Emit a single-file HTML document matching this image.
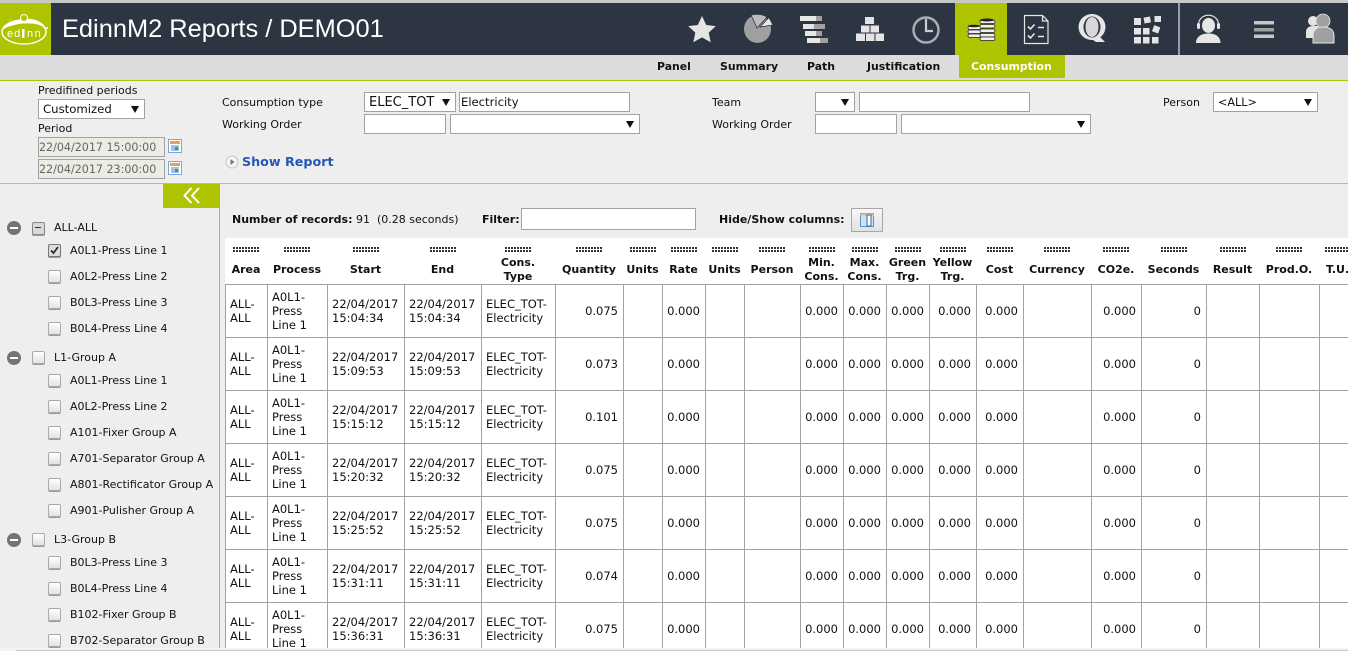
<!DOCTYPE html>
<html><head><meta charset="utf-8"><title>EdinnM2 Reports</title>
<style>
html,body{margin:0;padding:0;width:1348px;height:651px;overflow:hidden;background:#f4f4f4}
body{font:11px/14px "DejaVu Sans",sans-serif;color:#111;position:relative}
.a{position:absolute;white-space:nowrap}
.box{position:absolute;background:#fff;border:1px solid #a2a2a2;box-sizing:border-box;height:20px;line-height:19px;padding-left:4px;font-size:11.7px;white-space:nowrap}
.box i{position:absolute;right:5px;top:6px;width:0;height:0;border-left:4px solid transparent;border-right:4px solid transparent;border-top:7px solid #111}
.dis{background:#ecebe4;color:#666;padding-left:0;font-size:11.1px}
.tab{position:absolute;top:60px;font-weight:bold;font-size:10.9px;white-space:nowrap;color:#111}
.minus{position:absolute;left:7px;width:14px;height:14px;border-radius:50%;background:#747474}
.minus:after{content:"";position:absolute;left:3px;top:6px;width:8px;height:2px;background:#fff}
.cb{position:absolute;width:11px;height:11px;border:1px solid #aaa;border-radius:2px;background:linear-gradient(#fff,#e2e2e2);box-shadow:0 1px 0 #999}
.t{position:absolute;white-space:nowrap}
table{border-collapse:collapse;table-layout:fixed;position:absolute}
#hd{left:225px;top:238px;width:1155px;background:#fff}
#hd th{height:46px;padding:0;text-align:center;vertical-align:top;font-size:11px;line-height:14px;position:relative;overflow:visible;white-space:nowrap}
#hd th u{position:absolute;left:50%;margin-left:-13px;top:9px;width:26px;height:5px;background:repeating-linear-gradient(90deg,#333 0 2px,transparent 2px 3px);-webkit-mask:repeating-linear-gradient(#000 0 2px,transparent 2px 3px)}
#hd th b{position:absolute;left:-6px;right:-6px;bottom:0;height:28px;display:flex;align-items:center;justify-content:center;font-weight:bold}
#bd{left:225px;top:284px;width:1155px;background:#fff}
#bd td{border:1px solid #a2a2a2;height:52px;padding:0 4px;font-size:11.5px;line-height:14px;overflow:hidden;white-space:nowrap;box-sizing:border-box}
#bd td.n{text-align:right;padding-right:5px}
#clip{position:absolute;left:0;top:0;width:1348px;height:648px;overflow:hidden}
</style></head><body>
<div id="clip">
<div class="a" style="left:0;top:0;width:1348px;height:3px;background:#c8c8c8"></div>
<div class="a" style="left:0;top:3px;width:1348px;height:52px;background:#2d3542"></div>
<div class="a" style="left:0;top:3px;width:51px;height:52px;background:#afc400"></div>
<div class="a" style="left:62px;top:13px;font:25.4px/32px 'Liberation Sans',sans-serif;color:#fff">EdinnM2 Reports / DEMO01</div>
<div class="a" style="left:955px;top:3px;width:52px;height:52px;background:#afc400"></div>
<div class="a" style="left:1178px;top:3px;width:2px;height:52px;background:#9a9fa6"></div>

<svg class="a" style="left:0;top:0" width="1348" height="55" viewBox="0 0 1348 55">
 <!-- logo -->
 <ellipse cx="24" cy="32" rx="22" ry="12" fill="none" stroke="#fff" stroke-width="1.500"/>
 <path d="M2 30C8 18 38 13 46 28C36 21 14 22 2 30Z" fill="#fff"/>
 <circle cx="24" cy="18" r="3.500" fill="#afc400" stroke="#fff" stroke-width="1"/>
 <text x="7" y="37" font-family="'Liberation Sans',sans-serif" font-size="11" letter-spacing="1" fill="#fff">ed</text>
 <rect x="22" y="29" width="2.500" height="9" fill="#fff"/>
 <text x="27" y="37" font-family="'Liberation Sans',sans-serif" font-size="11" letter-spacing="1.500" fill="#fff">nn</text>
 <circle cx="47" cy="28" r="1" fill="#fff"/>
 <!-- star -->
 <path d="M702 16l4.200 9 9.600 1.100-7.100 6.500 2 9.700-8.700-4.900-8.700 4.900 2-9.700-7.100-6.500 9.600-1.100z" fill="#e4e4e4"/>
 <!-- pie -->
 <ellipse cx="757.500" cy="29" rx="13.500" ry="14" fill="#a0a0a0"/>
 <path d="M757 28L751 15C756 14 763 14 767 17Z" fill="#bdbdbd" stroke="#2d3542" stroke-width=".8"/>
 <path d="M760 27L769 17.500L773 25Z" fill="#e8e8e8" stroke="#2d3542" stroke-width=".8"/>
 <!-- bars -->
 <g fill="#e6e6e6"><rect x="800" y="16" width="16" height="5"/><rect x="803" y="24" width="11" height="5"/><rect x="805" y="31" width="11" height="5"/><rect x="807" y="38" width="13" height="5"/></g>
 <g fill="#a0a0a0"><rect x="816" y="16" width="6" height="5"/><rect x="814" y="24" width="11" height="5"/><rect x="816" y="31" width="6" height="5"/><rect x="820" y="38" width="8" height="5"/></g>
 <!-- pyramid -->
 <g fill="#e4e4e4"><rect x="865" y="17" width="9" height="7"/><rect x="861" y="25.500" width="8.500" height="7"/><rect x="870.500" y="25.500" width="8.500" height="7"/><rect x="856" y="33.500" width="9" height="7.500"/><rect x="866" y="33.500" width="8.500" height="7.500"/><rect x="875.500" y="33.500" width="8.500" height="7.500"/></g>
 <!-- clock -->
 <circle cx="926" cy="30" r="12.500" fill="none" stroke="#a9adb6" stroke-width="2.500"/>
 <path d="M926 19v12h7" fill="none" stroke="#c9ccd2" stroke-width="2.200"/>
 <!-- coins -->
 <g fill="#eee" stroke="#222" stroke-width=".8">
  <rect x="968" y="26" width="13" height="3.500" rx="1.700"/><rect x="968" y="30" width="13" height="3.500" rx="1.700"/><rect x="968" y="34" width="13" height="3.500" rx="1.700"/>
  <rect x="980" y="20" width="15" height="3.500" rx="1.700"/><rect x="980" y="24.500" width="15" height="3.500" rx="1.700"/><rect x="980" y="29" width="15" height="3.500" rx="1.700"/><rect x="980" y="33.500" width="15" height="3.500" rx="1.700"/><rect x="980" y="37" width="15" height="3.500" rx="1.700"/>
 </g>
 <ellipse cx="987" cy="20" rx="7" ry="1.500" fill="#222"/><ellipse cx="974" cy="26" rx="6" ry="1.300" fill="#222"/>
 <!-- checklist -->
 <path d="M1024.500 15.500h18l5.500 5.500v22.500h-23.500zM1042.500 15.500v5.500h5.500" fill="none" stroke="#e6e6e6" stroke-width="1.200"/>
 <path d="M1028 26.500l2.500 2.500 4-4.500M1028 35.500l2.500 2.500 4-4.500" fill="none" stroke="#e6e6e6" stroke-width="1.600"/>
 <path d="M1038 27.500h6M1038 36.500h6" stroke="#e6e6e6" stroke-width="1.600"/>
 <!-- Q -->
 <path d="M1090 38l6 4 9 0-6-6z" fill="#e6e6e6"/>
 <ellipse cx="1092" cy="27" rx="13.500" ry="13" fill="#e6e6e6"/>
 <ellipse cx="1092" cy="27" rx="8.500" ry="10.500" fill="#2d3542"/>
 <ellipse cx="1092" cy="27" rx="6.500" ry="10" fill="#d8d8d8"/>
 <!-- grid -->
 <g fill="#e4e4e4"><rect x="1134" y="18" width="7" height="7"/><rect x="1144" y="17" width="6.500" height="6" transform="rotate(-10 1147 20)"/><rect x="1154.500" y="16" width="6.500" height="6"/><rect x="1134" y="28" width="7" height="6.500"/><rect x="1143" y="28" width="6.500" height="6.500"/><rect x="1153" y="26" width="6.500" height="6.500" transform="rotate(20 1156 29)"/><rect x="1134" y="37" width="7" height="6.500"/><rect x="1143" y="37" width="6.500" height="6.500"/><rect x="1152" y="37" width="6.500" height="6.500"/></g>
 <!-- agent -->
 <ellipse cx="1208.500" cy="25.500" rx="6.500" ry="7.500" fill="#e6e6e6"/>
 <path d="M1198.500 25c0-13 20-13 20 0" fill="none" stroke="#d8d8d8" stroke-width="1.300"/>
 <rect x="1197" y="23" width="3" height="6" rx="1.500" fill="#e6e6e6"/><rect x="1217" y="23" width="3" height="6" rx="1.500" fill="#e6e6e6"/>
 <path d="M1196 43c0-6 5-9.500 12.500-9.500s12 3.500 12 9.500z" fill="#e6e6e6"/>
 <!-- menu -->
 <g fill="#c8c8c8"><rect x="1254" y="21" width="20" height="3.500"/><rect x="1254" y="28" width="20" height="3.500" fill="#a0a0a0"/><rect x="1254" y="34.500" width="20" height="3.500"/></g>
 <!-- people -->
 <circle cx="1313" cy="21" r="5" fill="#e4e4e4"/><path d="M1306 38v-6c0-4 3-6 7-6h5v12z" fill="#e4e4e4"/>
 <circle cx="1323" cy="21" r="7" fill="#a0a0a0" stroke="#e6e6e6" stroke-width=".8"/>
 <path d="M1313 43v-7c0-6 4-9 10.500-9s10.500 3 10.500 9v7z" fill="#a0a0a0" stroke="#e6e6e6" stroke-width="1"/>
</svg>

<!-- tabs -->
<div class="a" style="left:0;top:55px;width:1348px;height:25px;background:#dcdcdc;border-bottom:1px solid #afc400"></div>
<div class="a" style="left:959px;top:55px;width:106px;height:23px;background:#afc400"></div>
<div class="tab" style="left:657px">Panel</div>
<div class="tab" style="left:720px">Summary</div>
<div class="tab" style="left:807px">Path</div>
<div class="tab" style="left:867px">Justification</div>
<div class="tab" style="left:971px;color:#fff">Consumption</div>

<!-- filter panel -->
<div class="a" style="left:0;top:81px;width:1348px;height:102px;background:#eee;border-bottom:1px solid #b9b9a5"></div>
<div class="t" style="left:38px;top:84px">Predifined periods</div>
<div class="box" style="left:38px;top:99px;width:107px">Customized<i></i></div>
<div class="t" style="left:38px;top:122px">Period</div>
<div class="box dis" style="left:38px;top:137px;width:127px">22/04/2017 15:00:00</div>
<div class="box dis" style="left:38px;top:159px;width:127px">22/04/2017 23:00:00</div>
<svg class="a" style="left:168px;top:139px" width="14" height="36" viewBox="0 0 14 36">
 <g><rect x=".5" y=".5" width="13" height="13" fill="#fff" stroke="#7aa7d8"/><rect x="2" y="2" width="10" height="3" fill="#e8a050"/><rect x="3" y="6" width="8" height="6" fill="#9fc4e8"/><rect x="7" y="8" width="3" height="3" fill="#4a9a40"/></g>
 <g transform="translate(0,22)"><rect x=".5" y=".5" width="13" height="13" fill="#fff" stroke="#7aa7d8"/><rect x="2" y="2" width="10" height="3" fill="#e8a050"/><rect x="3" y="6" width="8" height="6" fill="#9fc4e8"/><rect x="7" y="8" width="3" height="3" fill="#4a9a40"/></g>
</svg>
<div class="t" style="left:222px;top:96px">Consumption type</div>
<div class="t" style="left:222px;top:118px">Working Order</div>
<div class="box" style="left:364px;top:92px;width:92px;font-size:13px">ELEC_TOT<i></i></div>
<div class="box" style="left:459px;top:92px;width:171px;padding-left:1px;font-size:11.6px">Electricity</div>
<div class="box" style="left:364px;top:114px;width:82px"></div>
<div class="box" style="left:450px;top:114px;width:190px"><i></i></div>
<div class="t" style="left:712px;top:96px">Team</div>
<div class="t" style="left:712px;top:118px">Working Order</div>
<div class="box" style="left:815px;top:92px;width:40px"><i></i></div>
<div class="box" style="left:859px;top:92px;width:171px"></div>
<div class="box" style="left:815px;top:114px;width:82px"></div>
<div class="box" style="left:901px;top:114px;width:190px"><i></i></div>
<div class="t" style="left:1163px;top:96px">Person</div>
<div class="box" style="left:1213px;top:92px;width:105px;font-size:11.2px">&lt;ALL&gt;<i></i></div>
<svg class="a" style="left:225px;top:155px" width="14" height="14" viewBox="0 0 14 14"><circle cx="7" cy="7" r="6" fill="#f4f4f4" stroke="#c4c4c4"/><path d="M5.500 4l4 3-4 3z" fill="#777"/></svg>
<div class="t" style="left:242px;top:154px;font-size:12.7px;line-height:16px;font-weight:bold;color:#2456b8">Show Report</div>

<!-- sidebar -->
<div class="a" style="left:0;top:184px;width:219px;height:470px;background:#eee;border-right:1px solid #afc400"></div>
<div class="a" style="left:163px;top:184px;width:56px;height:24px;background:#afc400"></div>
<svg class="a" style="left:183px;top:187px" width="18" height="18" viewBox="0 0 18 18"><path d="M8.500 1L1.500 8.500l7 7.500M16 1L9 8.500l7 7.500" fill="none" stroke="#fff" stroke-width="2"/></svg>

<div class="minus" style="top:221px"></div><div class="cb" style="left:32px;top:222px;background:#d8d8d8;border-color:#888"></div><div class="a" style="left:35px;top:227px;width:6px;height:1px;background:#333"></div><div class="t" style="left:54px;top:221px">ALL-ALL</div>
<div class="cb" style="left:48px;top:244px;background:#ddd;border-color:#777"></div><svg class="a" style="left:49px;top:245px" width="11" height="11" viewBox="0 0 11 11"><path d="M2 5.500l2.500 2.500 4.500-6" fill="none" stroke="#222" stroke-width="1.600"/></svg><div class="t" style="left:70px;top:244px">A0L1-Press Line 1</div>
<div class="cb" style="left:48px;top:270px"></div><div class="t" style="left:70px;top:270px">A0L2-Press Line 2</div>
<div class="cb" style="left:48px;top:296px"></div><div class="t" style="left:70px;top:296px">B0L3-Press Line 3</div>
<div class="cb" style="left:48px;top:322px"></div><div class="t" style="left:70px;top:322px">B0L4-Press Line 4</div>
<div class="minus" style="top:351px"></div><div class="cb" style="left:32px;top:351px"></div><div class="t" style="left:54px;top:351px">L1-Group A</div>
<div class="cb" style="left:48px;top:374px"></div><div class="t" style="left:70px;top:374px">A0L1-Press Line 1</div>
<div class="cb" style="left:48px;top:400px"></div><div class="t" style="left:70px;top:400px">A0L2-Press Line 2</div>
<div class="cb" style="left:48px;top:426px"></div><div class="t" style="left:70px;top:426px">A101-Fixer Group A</div>
<div class="cb" style="left:48px;top:452px"></div><div class="t" style="left:70px;top:452px">A701-Separator Group A</div>
<div class="cb" style="left:48px;top:478px"></div><div class="t" style="left:70px;top:478px">A801-Rectificator Group A</div>
<div class="cb" style="left:48px;top:504px"></div><div class="t" style="left:70px;top:504px">A901-Pulisher Group A</div>
<div class="minus" style="top:533px"></div><div class="cb" style="left:32px;top:533px"></div><div class="t" style="left:54px;top:533px">L3-Group B</div>
<div class="cb" style="left:48px;top:556px"></div><div class="t" style="left:70px;top:556px">B0L3-Press Line 3</div>
<div class="cb" style="left:48px;top:582px"></div><div class="t" style="left:70px;top:582px">B0L4-Press Line 4</div>
<div class="cb" style="left:48px;top:608px"></div><div class="t" style="left:70px;top:608px">B102-Fixer Group B</div>
<div class="cb" style="left:48px;top:634px"></div><div class="t" style="left:70px;top:634px">B702-Separator Group B</div>

<!-- main -->
<div class="a" style="left:220px;top:184px;width:1128px;height:470px;background:#eee"></div>
<div class="t" style="left:232px;top:213px"><b>Number of records:</b> 91 &nbsp;(0.28 seconds)</div>
<div class="t" style="left:482px;top:213px"><b>Filter:</b></div>
<div class="box" style="left:521px;top:208px;width:175px;height:22px"></div>
<div class="t" style="left:719px;top:213px"><b>Hide/Show columns:</b></div>
<div class="a" style="left:851px;top:208px;width:32px;height:24px;box-sizing:border-box;border:1px solid #a8a8a8;background:linear-gradient(#f8f8f8,#e2e2e2)"></div>
<svg class="a" style="left:860px;top:213px" width="14" height="14" viewBox="0 0 14 14"><rect x=".5" y=".5" width="13" height="13" fill="#cfe2f5" stroke="#5b93cf"/><rect x=".5" y=".5" width="13" height="2.500" fill="#f0c880"/><rect x="7" y="2" width="4" height="11" fill="#fff" stroke="#2d66b0"/></svg>

<table id="hd"><colgroup><col style="width:42px"><col style="width:60px"><col style="width:77px"><col style="width:77px"><col style="width:74px"><col style="width:68px"><col style="width:39px"><col style="width:43px"><col style="width:39px"><col style="width:56px"><col style="width:43px"><col style="width:43px"><col style="width:43px"><col style="width:47px"><col style="width:47px"><col style="width:68px"><col style="width:50px"><col style="width:65px"><col style="width:53px"><col style="width:60px"><col style="width:61px"></colgroup>
<tr><th><u></u><b>Area</b></th><th><u></u><b>Process</b></th><th><u></u><b>Start</b></th><th><u></u><b>End</b></th><th><u></u><b>Cons.<br>Type</b></th><th><u></u><b>Quantity</b></th><th><u></u><b>Units</b></th><th><u></u><b>Rate</b></th><th><u></u><b>Units</b></th><th><u></u><b>Person</b></th><th><u></u><b>Min.<br>Cons.</b></th><th><u></u><b>Max.<br>Cons.</b></th><th><u></u><b>Green<br>Trg.</b></th><th><u></u><b>Yellow<br>Trg.</b></th><th><u></u><b>Cost</b></th><th><u></u><b>Currency</b></th><th><u></u><b>CO2e.</b></th><th><u></u><b>Seconds</b></th><th><u></u><b>Result</b></th><th><u></u><b>Prod.O.</b></th><th style="text-align:left"><u style="left:0;margin-left:6px"></u><b style="left:7px;right:auto;justify-content:flex-start">T.U.</b></th></tr></table>

<table id="bd"><colgroup><col style="width:42px"><col style="width:60px"><col style="width:77px"><col style="width:77px"><col style="width:74px"><col style="width:68px"><col style="width:39px"><col style="width:43px"><col style="width:39px"><col style="width:56px"><col style="width:43px"><col style="width:43px"><col style="width:43px"><col style="width:47px"><col style="width:47px"><col style="width:68px"><col style="width:50px"><col style="width:65px"><col style="width:53px"><col style="width:60px"><col style="width:61px"></colgroup>
<tr style="height:53px"><td>ALL-<br>ALL</td><td>A0L1-<br>Press<br>Line 1</td><td>22/04/2017<br>15:04:34</td><td>22/04/2017<br>15:04:34</td><td>ELEC_TOT-<br>Electricity</td><td class="n">0.075</td><td></td><td class="n">0.000</td><td></td><td></td><td class="n">0.000</td><td class="n">0.000</td><td class="n">0.000</td><td class="n">0.000</td><td class="n">0.000</td><td></td><td class="n">0.000</td><td class="n">0</td><td></td><td></td><td></td></tr>
<tr style="height:53px"><td>ALL-<br>ALL</td><td>A0L1-<br>Press<br>Line 1</td><td>22/04/2017<br>15:09:53</td><td>22/04/2017<br>15:09:53</td><td>ELEC_TOT-<br>Electricity</td><td class="n">0.073</td><td></td><td class="n">0.000</td><td></td><td></td><td class="n">0.000</td><td class="n">0.000</td><td class="n">0.000</td><td class="n">0.000</td><td class="n">0.000</td><td></td><td class="n">0.000</td><td class="n">0</td><td></td><td></td><td></td></tr>
<tr style="height:53px"><td>ALL-<br>ALL</td><td>A0L1-<br>Press<br>Line 1</td><td>22/04/2017<br>15:15:12</td><td>22/04/2017<br>15:15:12</td><td>ELEC_TOT-<br>Electricity</td><td class="n">0.101</td><td></td><td class="n">0.000</td><td></td><td></td><td class="n">0.000</td><td class="n">0.000</td><td class="n">0.000</td><td class="n">0.000</td><td class="n">0.000</td><td></td><td class="n">0.000</td><td class="n">0</td><td></td><td></td><td></td></tr>
<tr style="height:53px"><td>ALL-<br>ALL</td><td>A0L1-<br>Press<br>Line 1</td><td>22/04/2017<br>15:20:32</td><td>22/04/2017<br>15:20:32</td><td>ELEC_TOT-<br>Electricity</td><td class="n">0.075</td><td></td><td class="n">0.000</td><td></td><td></td><td class="n">0.000</td><td class="n">0.000</td><td class="n">0.000</td><td class="n">0.000</td><td class="n">0.000</td><td></td><td class="n">0.000</td><td class="n">0</td><td></td><td></td><td></td></tr>
<tr style="height:53px"><td>ALL-<br>ALL</td><td>A0L1-<br>Press<br>Line 1</td><td>22/04/2017<br>15:25:52</td><td>22/04/2017<br>15:25:52</td><td>ELEC_TOT-<br>Electricity</td><td class="n">0.075</td><td></td><td class="n">0.000</td><td></td><td></td><td class="n">0.000</td><td class="n">0.000</td><td class="n">0.000</td><td class="n">0.000</td><td class="n">0.000</td><td></td><td class="n">0.000</td><td class="n">0</td><td></td><td></td><td></td></tr>
<tr style="height:53px"><td>ALL-<br>ALL</td><td>A0L1-<br>Press<br>Line 1</td><td>22/04/2017<br>15:31:11</td><td>22/04/2017<br>15:31:11</td><td>ELEC_TOT-<br>Electricity</td><td class="n">0.074</td><td></td><td class="n">0.000</td><td></td><td></td><td class="n">0.000</td><td class="n">0.000</td><td class="n">0.000</td><td class="n">0.000</td><td class="n">0.000</td><td></td><td class="n">0.000</td><td class="n">0</td><td></td><td></td><td></td></tr>
<tr style="height:53px"><td>ALL-<br>ALL</td><td>A0L1-<br>Press<br>Line 1</td><td>22/04/2017<br>15:36:31</td><td>22/04/2017<br>15:36:31</td><td>ELEC_TOT-<br>Electricity</td><td class="n">0.075</td><td></td><td class="n">0.000</td><td></td><td></td><td class="n">0.000</td><td class="n">0.000</td><td class="n">0.000</td><td class="n">0.000</td><td class="n">0.000</td><td></td><td class="n">0.000</td><td class="n">0</td><td></td><td></td><td></td></tr>
</table>
</div>
<div class="a" style="left:16px;top:650px;width:1332px;height:1px;background:#c4c4c4"></div>
</body></html>
